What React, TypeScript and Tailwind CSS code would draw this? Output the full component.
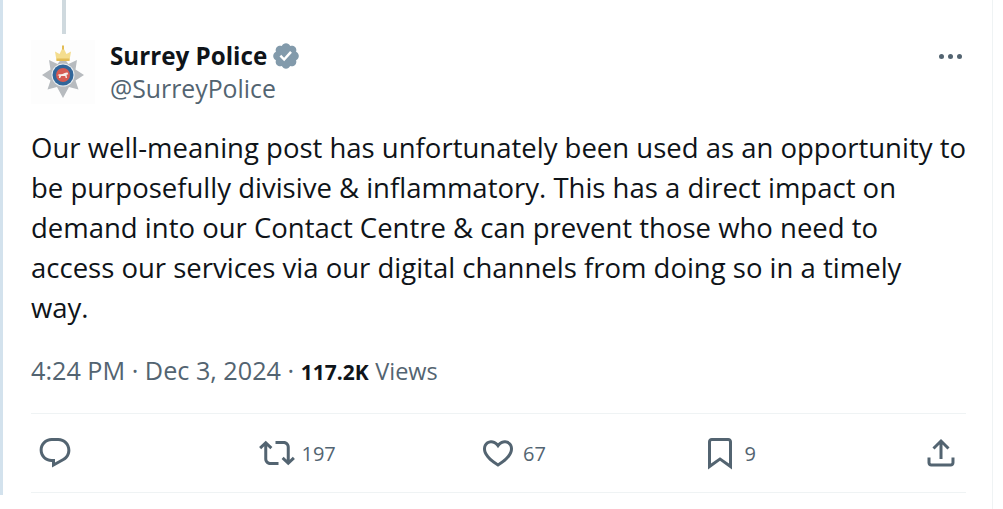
const font = { fontFamily: '"Open Sans", "Noto Sans", sans-serif' };

function Icon({ d, className }: { d: string; className?: string }) {
  return (
    <svg viewBox="0 0 24 24" fill="currentColor" className={className}>
      <path d={d} />
    </svg>
  );
}

const icons = {
  reply:
    "M1.751 10c0-4.42 3.584-8 8.005-8h4.366c4.49 0 8.129 3.64 8.129 8.13 0 2.96-1.607 5.68-4.196 7.11l-8.054 4.46v-3.69h-.067c-4.49.1-8.183-3.51-8.183-8.01zm8.005-6c-3.317 0-6.005 2.69-6.005 6 0 3.37 2.77 6.08 6.138 6.01l.351-.01h1.761v2.3l5.087-2.81c1.951-1.08 3.163-3.13 3.163-5.36 0-3.39-2.744-6.13-6.129-6.13H9.756z",
  retweet:
    "M4.5 3.88l4.432 4.14-1.364 1.46L5.5 7.55V16c0 1.1.896 2 2 2H13v2H7.5c-2.209 0-4-1.79-4-4V7.55L1.432 9.48.068 8.02 4.5 3.88zM16.5 6H11V4h5.5c2.209 0 4 1.79 4 4v8.45l2.068-1.93 1.364 1.46-4.432 4.14-4.432-4.14 1.364-1.46 2.068 1.93V8c0-1.1-.896-2-2-2z",
  like:
    "M16.697 5.5c-1.222-.06-2.679.51-3.89 2.16l-.805 1.09-.806-1.09C9.984 6.01 8.526 5.44 7.304 5.5c-1.243.07-2.349.78-2.91 1.91-.552 1.12-.633 2.78.479 4.82 1.074 1.97 3.257 4.27 7.129 6.61 3.87-2.34 6.052-4.64 7.126-6.61 1.111-2.04 1.03-3.7.477-4.82-.561-1.13-1.666-1.84-2.908-1.91zm4.187 7.69c-1.351 2.48-4.001 5.12-8.379 7.67l-.503.3-.504-.3c-4.379-2.55-7.029-5.19-8.382-7.67-1.36-2.5-1.41-4.86-.514-6.67.887-1.79 2.647-2.91 4.601-3.01 1.651-.09 3.368.56 4.798 2.01 1.429-1.45 3.146-2.1 4.796-2.01 1.954.1 3.714 1.22 4.601 3.01.896 1.81.846 4.17-.514 6.67z",
  bookmark:
    "M4 4.5C4 3.12 5.119 2 6.5 2h11C18.881 2 20 3.12 20 4.5v18.44l-8-5.71-8 5.71V4.5zM6.5 4c-.276 0-.5.22-.5.5v14.56l6-4.29 6 4.29V4.5c0-.28-.224-.5-.5-.5h-11z",
  share:
    "M12 2.59l5.7 5.7-1.41 1.42L13 6.41V16h-2V6.41l-3.3 3.3-1.41-1.42L12 2.59zM21 15l-.02 3.51c0 1.38-1.12 2.49-2.5 2.49H5.5C4.11 21 3 19.88 3 18.5V15h2v3.5c0 .28.22.5.5.5h12.98c.28 0 .5-.22.5-.5L19 15h2z",
  verified:
    "M22.25 12c0-1.43-.88-2.67-2.19-3.34.46-1.39.2-2.9-.81-3.91s-2.52-1.27-3.91-.81c-.66-1.31-1.91-2.19-3.34-2.19s-2.67.88-3.33 2.19c-1.4-.46-2.91-.2-3.92.81s-1.26 2.52-.8 3.91c-1.31.67-2.2 1.91-2.2 3.34s.89 2.67 2.2 3.34c-.46 1.39-.21 2.9.8 3.91s2.52 1.26 3.91.81c.67 1.31 1.91 2.19 3.34 2.19s2.68-.88 3.34-2.19c1.39.45 2.9.2 3.91-.81s1.27-2.52.81-3.91c1.31-.67 2.19-1.91 2.19-3.34zm-11.71 4.2L6.8 12.46l1.41-1.42 2.26 2.26 4.8-5.23 1.47 1.36-6.2 6.77z",
};

function Crest() {
  return (
    <svg viewBox="0 0 64 64" className="w-16 h-16" style={{ filter: "blur(0.6px)" }}>
      {/* star */}
      <path
        d="M32 17l5.500 7 8.500-4-1.500 9.500 8.500 5.500-8.500 5.500 3 9-9.500-2.500-6 11-6-11-9.500 2.500 3-9-8.500-5.500 8.500-5.500-1.500-9.500 8.500 4z"
        fill="#b7bbbf"
      />
      {/* crown */}
      <path d="M25.500 20.500l-1.500-9 4.500 2.500 3.500-7 3.500 7 4.500-2.500-1.500 9z" fill="#f4dd8e" />
      <rect x="25.500" y="18.500" width="13" height="2.500" fill="#e2bc55" />
      <rect x="31" y="5.500" width="2" height="4" fill="#e2bc55" />
      {/* badge */}
      <circle cx="32" cy="35" r="11.500" fill="#e9edf0" />
      <circle cx="32" cy="35" r="10.500" fill="#31669a" />
      <circle cx="32" cy="35" r="7" fill="#d65a52" />
      {/* horse */}
      <path d="M26.500 35.500c1-1.800 3-1 5-1.500 2-.6 3-1.800 5-1.500l.8 1.800-1.800.5.500 3.200h-1.300l-.5-2h-4l-1 2h-1.300l.300-2.500z" fill="#f6eeea" />
    </svg>
  );
}

function Stat({ icon, label }: { icon: string; label?: string }) {
  return (
    <div className="flex flex-1 items-center">
      <Icon d={icon} className="w-9 h-9 shrink-0" />
      {label && <span className="text-[20px] leading-none ml-[7px] mt-[2px]">{label}</span>}
    </div>
  );
}

export default function App() {
  return (
    <div className="flex w-[1003px] h-[509px] bg-white overflow-hidden" style={font}>
      <div className="w-[3px] h-[495px] bg-[#d3e2ed] shrink-0" />
      <div className="w-[990px] h-full border-r border-[#eff3f4] shrink-0 pl-[28px] pr-[26px]">
        <div className="w-[4px] h-[34px] ml-[31px] bg-[#cfd9de]" />

        <div className="flex mt-[6px] h-[66px]">
          <div className="w-16 h-16 shrink-0 bg-[#fdfdfd]">
            <Crest />
          </div>
          <div className="ml-[15px] flex-1 text-[#0f1419]">
            <div className="flex items-center h-[32px]">
              <span className="text-[24.2px] leading-8 font-bold">Surrey Police</span>
              <Icon d={icons.verified} className="w-[30px] h-[30px] ml-[4px] text-[#829aab]" />
            </div>
            <div className="text-[24.8px] leading-8 text-[#536471]">@SurreyPolice</div>
          </div>
          <div className="flex gap-[4px] mt-[14px] mr-[4px] h-[5px]">
            <span className="w-[5px] h-[5px] rounded-full bg-[#536471]" />
            <span className="w-[5px] h-[5px] rounded-full bg-[#536471]" />
            <span className="w-[5px] h-[5px] rounded-full bg-[#536471]" />
          </div>
        </div>

        <p className="mt-[22px] text-[27.5px] leading-10 text-[#0f1419] whitespace-nowrap">
          Our well-meaning post has unfortunately been used as an opportunity to
          <br />
          be purposefully divisive &amp; inflammatory. This has a direct impact on
          <br />
          demand into our Contact Centre &amp; can prevent those who need to
          <br />
          access our services via our digital channels from doing so in a timely
          <br />
          way.
        </p>

        <div className="mt-[26px] text-[25.2px] leading-8 text-[#536471]">
          4:24 PM · Dec 3, 2024 · <span className="font-bold text-[#0f1419] text-[21px]">117.2K</span>{" "}
          <span className="text-[23.5px]">Views</span>
        </div>

        <div className="mt-[25px] h-[80px] border-y border-[#eff3f4] flex items-center pl-[6px] pr-[7px] text-[#536471]">
          <Stat icon={icons.reply} />
          <Stat icon={icons.retweet} label="197" />
          <Stat icon={icons.like} label="67" />
          <Stat icon={icons.bookmark} label="9" />
          <Icon d={icons.share} className="w-9 h-9 shrink-0" />
        </div>
      </div>
    </div>
  );
}
